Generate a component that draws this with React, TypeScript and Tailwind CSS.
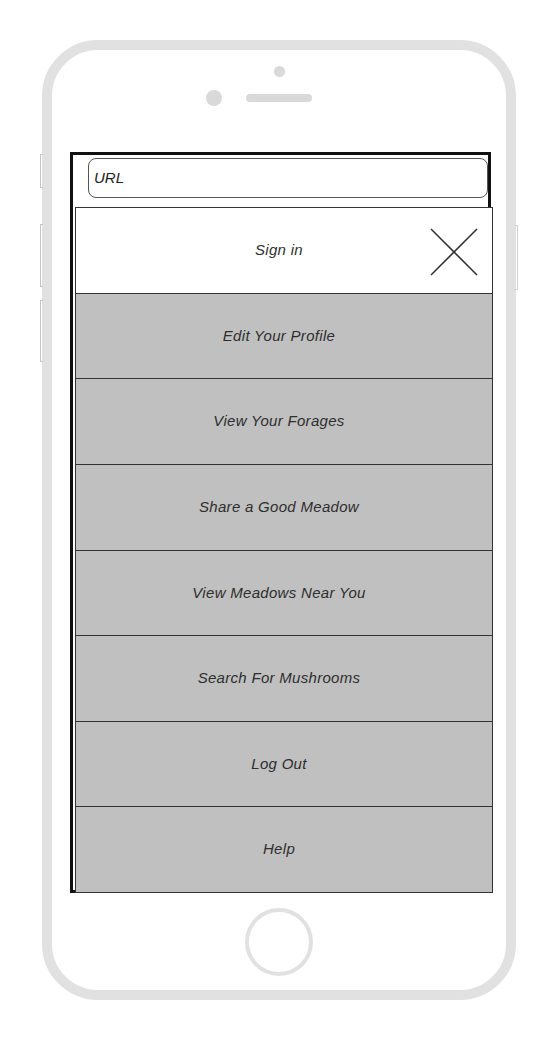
const MENU = [
  "Edit Your Profile",
  "View Your Forages",
  "Share a Good Meadow",
  "View Meadows Near You",
  "Search For Mushrooms",
  "Log Out",
  "Help",
];

function CloseIcon() {
  return (
    <svg width="48" height="48" viewBox="0 0 48 48" className="absolute right-[14px] top-[20px]">
      <line x1="1" y1="1" x2="47" y2="47" stroke="#333" strokeWidth="1.6" />
      <line x1="47" y1="1" x2="1" y2="47" stroke="#333" strokeWidth="1.6" />
    </svg>
  );
}

export default function App() {
  return (
    <div
      className="w-[558px] h-[1040px] bg-white pt-[40px] pl-[42px]"
      style={{ fontFamily: '"Liberation Sans", Arial, sans-serif' }}
    >
      <div className="relative w-[474px] h-[960px] rounded-[56px] border-[10px] border-[#e1e1e1] flex flex-col">
        {/* side buttons */}
        <div className="absolute left-[-12px] top-[104px] w-[3px] h-[34px] border-l border-y border-[#c4c4c4]" />
        <div className="absolute left-[-12px] top-[174px] w-[3px] h-[63px] border-l border-y border-[#c4c4c4]" />
        <div className="absolute left-[-12px] top-[250px] w-[3px] h-[62px] border-l border-y border-[#c4c4c4]" />
        <div className="absolute right-[-12px] top-[175px] w-[3px] h-[65px] border-r border-y border-[#d0d0d0]" />

        {/* camera + speaker */}
        <div className="self-center mt-[16px] w-[11px] h-[11px] rounded-full bg-[#d9d9d9]" />
        <div className="ml-[154px] mt-[13px] flex items-center gap-[24px]">
          <div className="w-[16px] h-[16px] rounded-full bg-[#d9d9d9]" />
          <div className="w-[66px] h-[8px] rounded-full bg-[#d9d9d9]" />
        </div>

        {/* screen */}
        <div className="ml-[18px] mt-[46px] w-[421px] h-[741px] border-[3px] border-[#111] flex flex-col">
          <div className="shrink-0 mt-[3px] ml-[15px] h-[40px] rounded-[8px] border border-[#555] flex items-center pl-[5px] italic text-[15px] text-[#222]">
            URL
          </div>
          <div className="shrink-0 mt-[9px] ml-[2px] w-[418px] h-[686px] border border-[#333] flex flex-col bg-white">
            <div className="relative flex-1 flex items-center justify-center pr-[10px] bg-white italic text-[15px] tracking-[0.3px] text-[#2e2e2e]">
              Sign in
              <CloseIcon />
            </div>
            {MENU.map((label) => (
              <div
                key={label}
                className="flex-1 flex items-center justify-center pr-[10px] border-t border-[#333] bg-[#c0c0c0] italic text-[15px] tracking-[0.3px] text-[#2e2e2e]"
              >
                {label}
              </div>
            ))}
          </div>
        </div>

        {/* home button */}
        <div className="self-center mt-[15px] w-[68px] h-[68px] rounded-full border-[4px] border-[#e1e1e1]" />
      </div>
    </div>
  );
}
